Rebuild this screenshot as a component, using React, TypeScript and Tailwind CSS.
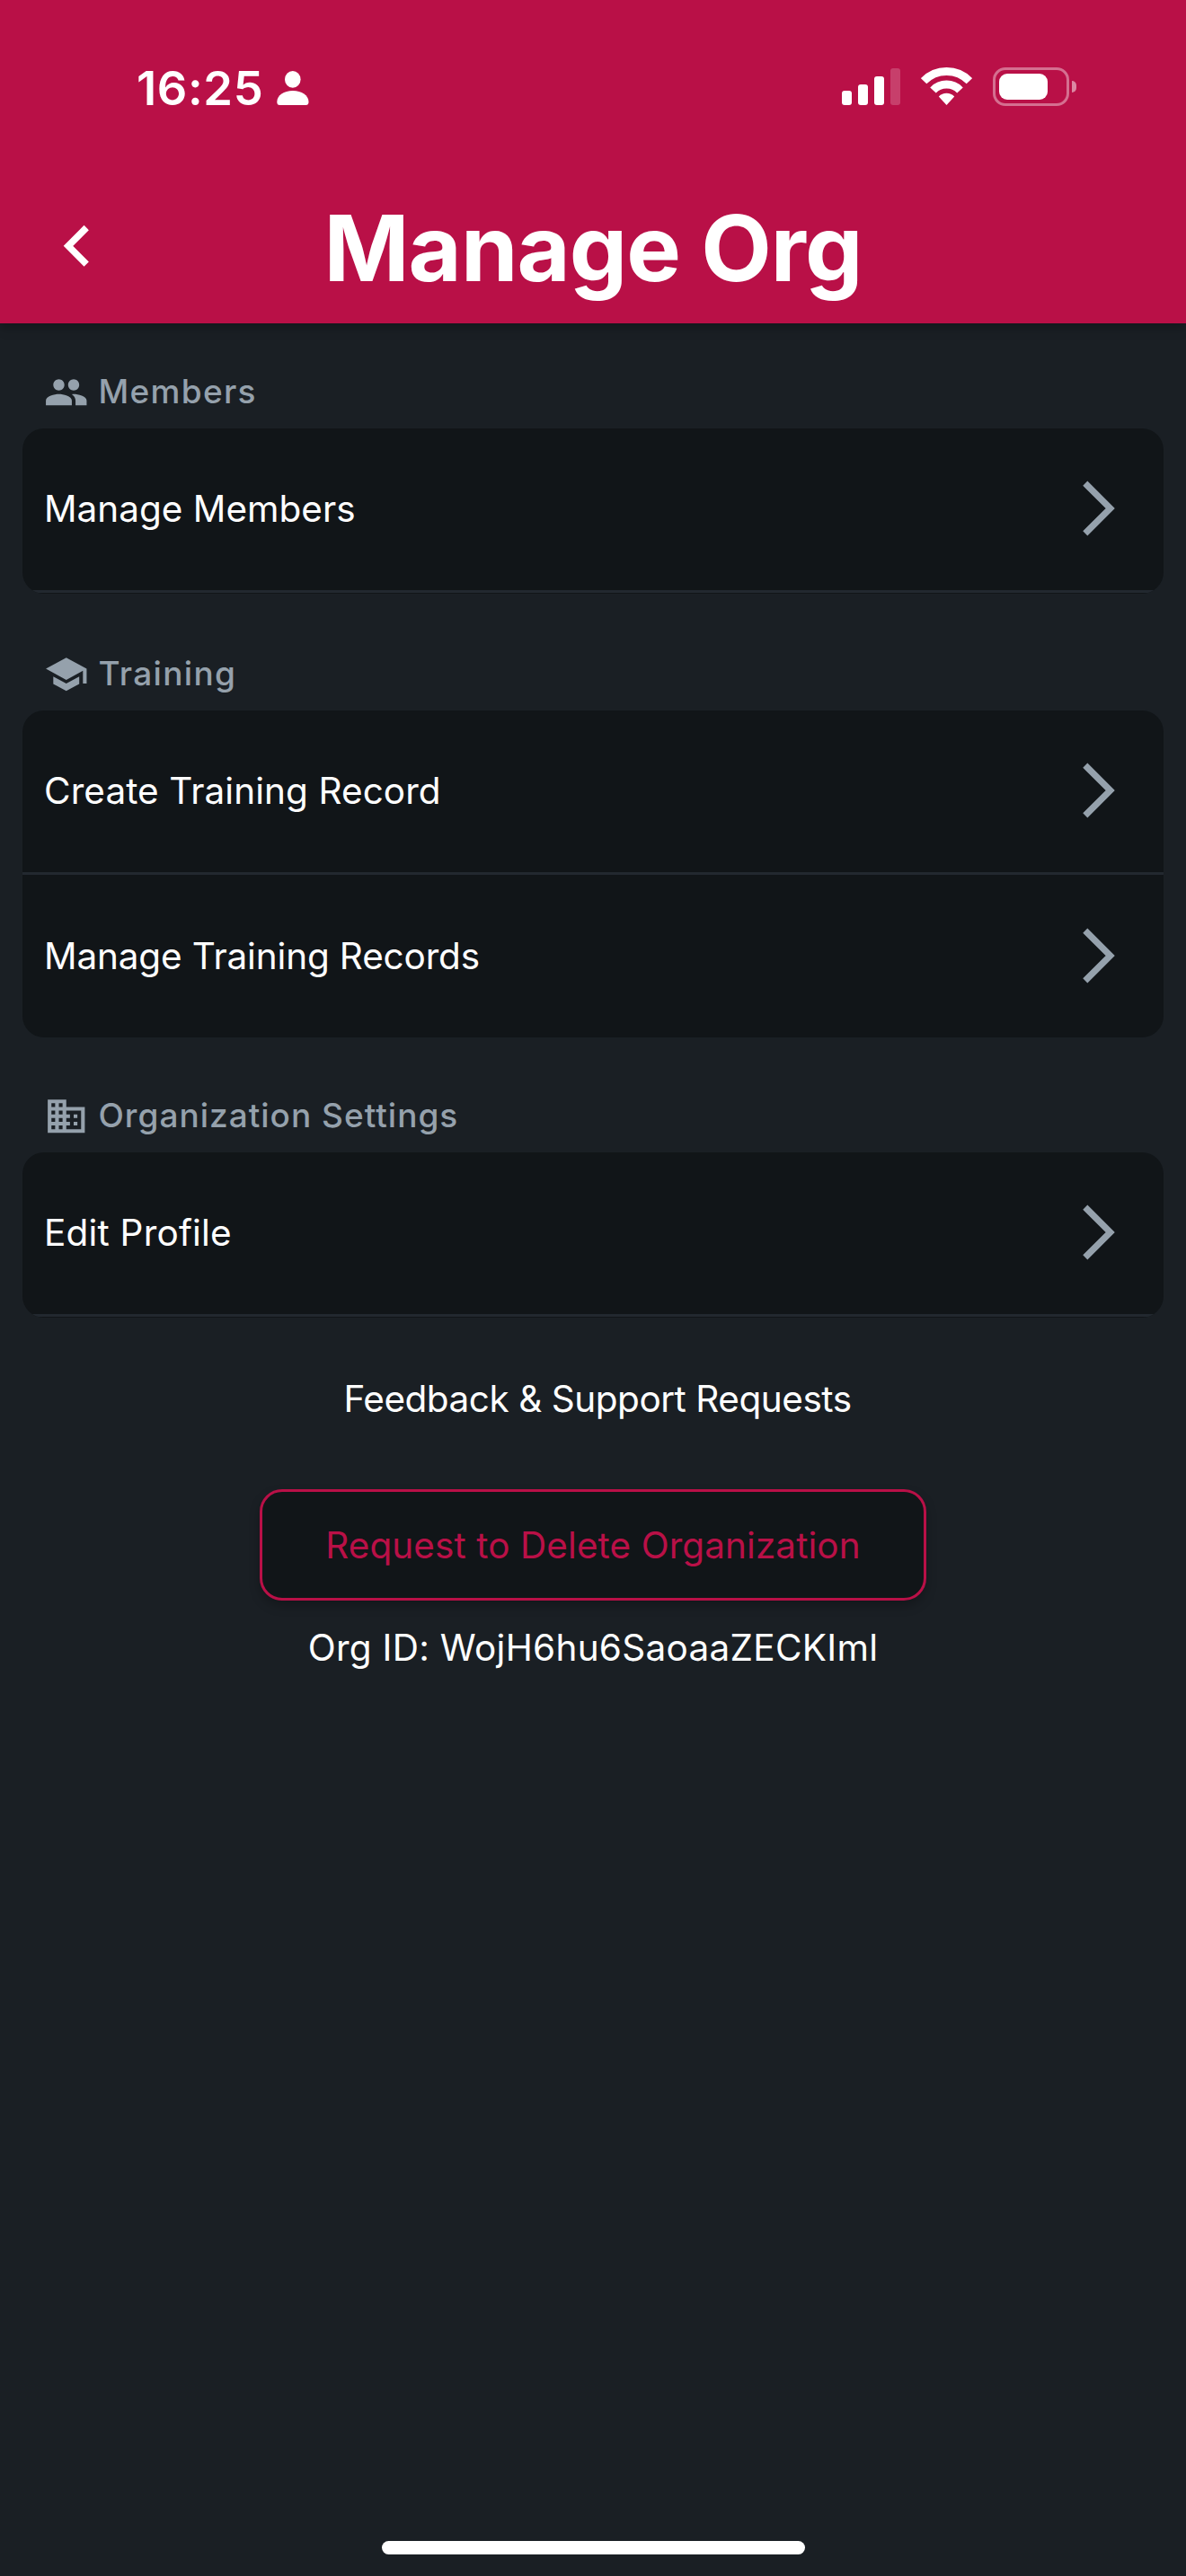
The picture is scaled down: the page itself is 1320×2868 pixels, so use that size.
import React from "react";
import { MdBusiness, MdPeople, MdSchool } from "react-icons/md";
import type { IconType } from "react-icons";

type Item = { label: string; spacing: string };

function StatusBar() {
  return (
    <div className="flex h-[192px] items-start justify-between pr-[122px] pl-[152px] text-white">
      <div className="flex items-start pt-[67px]">
        <span className="w-[156px] text-[52.5px] leading-[62px] font-semibold tracking-[0.6px] whitespace-nowrap">16:25</span>
        <svg className="mt-[12px]" width="36" height="39" viewBox="0 0 36 39" fill="currentColor">
          <ellipse cx="17.8" cy="9.4" rx="8.8" ry="9.4" />
          <path d="M0.3 34.5C0.3 27 8 22 17.9 22S35.5 27 35.5 34.5C35.5 37 34.4 38 32.5 38H3.3C1.4 38 0.3 37 0.3 34.5Z" />
        </svg>
      </div>
      <div className="flex items-start pt-[75px]">
        <div className="mr-[23px] flex h-[42px] items-end gap-[7px]">
          <div className="h-[16px] w-[11px] rounded-[3px] bg-white" />
          <div className="h-[23px] w-[11px] rounded-[3px] bg-white" />
          <div className="h-[32px] w-[11px] rounded-[3px] bg-white" />
          <div className="h-[41px] w-[11px] rounded-[3px] bg-white/20" />
        </div>
        <svg className="mr-[23px]" width="57" height="43" viewBox="-28.5 -40 57 43" fill="none" stroke="currentColor" strokeWidth="9">
          <path d="M-25.4 -24.8A35.5 35.5 0 0 1 25.4 -24.8" />
          <path d="M-15 -14.5A20.8 20.8 0 0 1 15 -14.5" />
          <path d="M0 2L-8.7 -7.6A12 12 0 0 1 8.7 -7.6Z" fill="currentColor" stroke="none" />
        </svg>
        <div className="mr-[3px] h-[43px] w-[85px] rounded-[14px] border-[3.5px] border-white/40 p-[4px]">
          <div className="h-[29px] w-[54px] rounded-[9px] bg-white" />
        </div>
        <div className="mt-[15px] h-[13px] w-[5px] rounded-r-full bg-white/50" />
      </div>
    </div>
  );
}

function Header() {
  return (
    <header className="h-[360px] bg-[#b91047] shadow-[0_5px_11px_rgba(0,0,0,0.25)]">
      <StatusBar />
      <div className="grid h-[168px] grid-cols-[200px_1fr_200px]">
        <svg className="mt-[58px] ml-[70px] text-white" width="30" height="48" viewBox="0 0 30 48" fill="none" stroke="currentColor" strokeWidth="7.5">
          <path d="M26.2 3.5L6 23.8L26.2 44.1" />
        </svg>
        <h1 className="pt-[24px] text-center text-[102px] leading-[120px] font-bold tracking-[-0.95px] whitespace-nowrap text-white">Manage Org</h1>
      </div>
    </header>
  );
}

function SectionTitle({ icon: Icon, spacing, children }: { icon: IconType; spacing: string; children: string }) {
  return (
    <div className="mb-[21px] flex h-[40px] items-center gap-[11px] pl-[24px] text-[#95a1ac]">
      <Icon className="mt-[2px] h-[49.5px] w-[49.5px] shrink-0" />
      <h2 className={`text-[37px] leading-[40px] font-medium whitespace-nowrap ${spacing}`}>{children}</h2>
    </div>
  );
}

function Row({ label, spacing }: Item) {
  return (
    <button className="flex h-[180px] w-full items-center justify-between pr-[54px] pl-[24px]">
      <span className={`text-[40.5px] leading-[50px] whitespace-nowrap text-white ${spacing}`}>{label}</span>
      <svg className="mb-[2px] text-[#95a1ac]" width="36" height="62" viewBox="0 0 36 62" fill="none" stroke="currentColor" strokeWidth="7.2">
        <path d="M2.8 3.1L30.7 31L2.8 58.9" />
      </svg>
    </button>
  );
}

export default function App() {
  return (
    <div className="flex h-[2868px] w-[1320px] flex-col bg-[#1a1f24] font-[Inter,sans-serif]">
      <Header />
      <main className="flex flex-1 flex-col px-[25px] pt-[56px]">
        <section>
          <SectionTitle icon={MdPeople} spacing="tracking-[1.3px]">Members</SectionTitle>
          <div className="overflow-hidden rounded-[24px] bg-[#111518]">
            <Row label="Manage Members" spacing="tracking-normal" />
            <div className="h-[3px] bg-[#22282f]" />
            <div className="h-px" />
          </div>
        </section>
        <section className="mt-[69px]">
          <SectionTitle icon={MdSchool} spacing="tracking-[1.3px]">Training</SectionTitle>
          <div className="overflow-hidden rounded-[24px] bg-[#111518]">
            <Row label="Create Training Record" spacing="tracking-[0.07px]" />
            <div className="mb-px h-[3px] bg-[#22282f]" />
            <Row label="Manage Training Records" spacing="tracking-[-0.16px]" />
          </div>
        </section>
        <section className="mt-[67px]">
          <SectionTitle icon={MdBusiness} spacing="tracking-[1px]">Organization Settings</SectionTitle>
          <div className="overflow-hidden rounded-[24px] bg-[#111518]">
            <Row label="Edit Profile" spacing="tracking-[0.2px]" />
            <div className="h-[3px] bg-[#22282f]" />
            <div className="h-px" />
          </div>
        </section>
        <div className="flex flex-col items-center text-[40.5px] leading-[50px] whitespace-nowrap text-white">
          <a className="mt-[66px] ml-[10px] tracking-[-0.47px]">Feedback &amp; Support Requests</a>
          <button className="mt-[75px] h-[124px] w-[742px] rounded-[25px] border-[3px] border-[#b91047] bg-[#111518] pt-[2px] tracking-[0.07px] text-[#b91047] shadow-[0_6px_12px_rgba(0,0,0,0.25)]">
            Request to Delete Organization
          </button>
          <p className="mt-[28px] tracking-[0.28px]">Org ID: WojH6hu6SaoaaZECKIml</p>
        </div>
        <div className="mx-auto mt-auto mb-[24px] h-[15px] w-[471px] rounded-full bg-white" />
      </main>
    </div>
  );
}
